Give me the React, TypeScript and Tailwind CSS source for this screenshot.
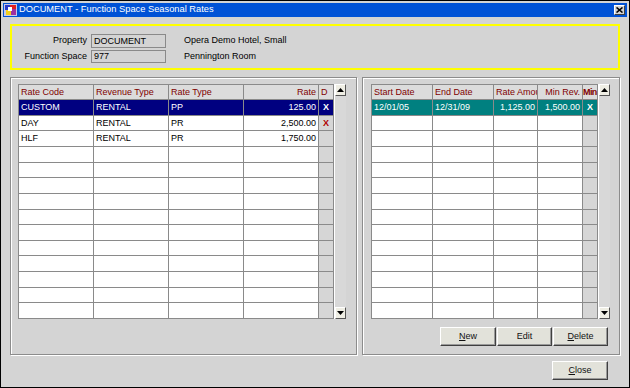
import React from 'react'

type Col = { title: string; w: number; align?: 'left' | 'right' | 'center'; bold?: boolean; gray?: boolean }
type Row = { cells: string[]; sel?: 'navy' | 'teal'; xRed?: boolean }

const LEFT_COLS: Col[] = [
  { title: 'Rate Code', w: 75 },
  { title: 'Revenue Type', w: 75 },
  { title: 'Rate Type', w: 75 },
  { title: 'Rate', w: 75, align: 'right' },
  { title: 'D', w: 15, align: 'center', gray: true },
]

const LEFT_ROWS: Row[] = [
  { cells: ['CUSTOM', 'RENTAL', 'PP', '125.00', 'X'], sel: 'navy' },
  { cells: ['DAY', 'RENTAL', 'PR', '2,500.00', 'X'], xRed: true },
  { cells: ['HLF', 'RENTAL', 'PR', '1,750.00', ''] },
]

const RIGHT_COLS: Col[] = [
  { title: 'Start Date', w: 61 },
  { title: 'End Date', w: 61 },
  { title: 'Rate Amount', w: 44, align: 'right' },
  { title: 'Min Rev.', w: 45, align: 'right' },
  { title: 'Min', w: 15, align: 'center', bold: true, gray: true },
]

const RIGHT_ROWS: Row[] = [{ cells: ['12/01/05', '12/31/09', '1,125.00', '1,500.00', 'X'], sel: 'teal' }]

function Arrow({ up }: { up?: boolean }) {
  return (
    <div className="h-[12px] w-[11px] ml-auto bg-[#efeee4] border border-t-white border-l-white border-r-[#555] border-b-[#555] flex items-center justify-center">
      <svg width="7" height="4" viewBox="0 0 7 4">
        {up ? <polygon points="0,4 7,4 3.5,0" fill="#000" /> : <polygon points="0,0 7,0 3.5,4" fill="#000" />}
      </svg>
    </div>
  )
}

function Grid({ cols, rows }: { cols: Col[]; rows: Row[] }) {
  const empty = 14 - rows.length
  return (
    <div className="flex h-[235px]">
      <div className="flex flex-col border-l border-t border-[#8a8a8a]">
        <div className="flex h-[15px]">
          {cols.map((c, i) => (
            <div
              key={i}
              style={{ width: c.w }}
              className={`h-full border-r border-b border-[#8a8a8a] bg-[#dcdcdc] overflow-hidden whitespace-nowrap leading-[14px] text-[#800000] ${c.bold ? 'font-bold px-0 tracking-[-0.6px]' : 'px-[2px]'} ${c.align === 'right' && c.title !== 'Rate Amount' ? 'text-right' : 'text-left'}`}
            >
              {c.title}
            </div>
          ))}
        </div>
        {rows.map((r, ri) => (
          <div key={ri} className="flex h-[15.7px]">
            {cols.map((c, i) => {
              const bg = r.sel === 'navy' ? 'bg-[#000080] text-white' : r.sel === 'teal' ? 'bg-[#008080] text-white' : c.gray ? 'bg-[#d6d6d6]' : 'bg-white'
              const isX = c.gray
              return (
                <div
                  key={i}
                  style={{ width: c.w }}
                  className={`h-full border-r border-b border-[#8a8a8a] overflow-hidden whitespace-nowrap px-[2px] leading-[15px] ${bg} ${c.align === 'right' ? 'text-right' : c.align === 'center' ? 'text-center' : 'text-left'} ${isX ? 'font-bold' : ''} ${isX && r.xRed ? 'text-[#b00000]' : ''}`}
                >
                  {r.cells[i]}
                </div>
              )
            })}
          </div>
        ))}
        {Array.from({ length: empty }).map((_, ri) => (
          <div key={'e' + ri} className="flex h-[15.7px]">
            {cols.map((c, i) => (
              <div
                key={i}
                style={{ width: c.w }}
                className={`h-full border-r border-b border-[#8a8a8a] ${c.gray ? 'bg-[#d6d6d6]' : 'bg-white'}`}
              />
            ))}
          </div>
        ))}
      </div>
      <div className="w-[12px] flex flex-col bg-[#d8d8d8] border-l border-white">
        <Arrow up />
        <div className="flex-1" />
        <Arrow />
      </div>
    </div>
  )
}

function Btn({ children, w }: { children: React.ReactNode; w: string }) {
  return (
    <div
      className={`${w} h-[19px] bg-[#e2e2da] border border-t-white border-l-white border-r-[#404040] border-b-[#404040] shadow-[inset_-1px_-1px_0_#9a9a9a] flex items-center justify-center text-[#111]`}
    >
      {children}
    </div>
  )
}

export default function App() {
  return (
    <div className="w-[630px] h-[388px] bg-[#d4d4d4] border border-black p-[2px] flex flex-col text-[9px] text-black font-['Liberation_Sans',Arial,sans-serif]">
      <div className="h-[14px] bg-[#0052d6] flex items-center pl-[1px] pr-[2px]">
        <svg width="13" height="12" viewBox="0 0 13 12" className="shrink-0">
          <rect x="0" y="0" width="13" height="12" fill="#c8c8e8" />
          <rect x="1" y="1" width="5" height="5" fill="#2a3ac8" />
          <rect x="6" y="1" width="6" height="4" fill="#e02020" />
          <rect x="2" y="6" width="5" height="5" fill="#f0d020" />
          <rect x="7" y="5" width="5" height="6" fill="#a030a0" />
          <rect x="4" y="3" width="4" height="4" fill="#ffffff" />
        </svg>
        <span className="ml-[2px] text-white text-[9.3px] leading-none">DOCUMENT - Function Space Seasonal Rates</span>
        <div className="ml-auto w-[11px] h-[10px] bg-[#d4d4d4] border border-t-white border-l-white border-r-[#404040] border-b-[#404040] flex items-center justify-center">
          <svg width="7" height="6" viewBox="0 0 7 6">
            <path d="M0.5 0.5 L6.5 5.5 M6.5 0.5 L0.5 5.5" stroke="#000" strokeWidth="1.6" />
          </svg>
        </div>
      </div>

      <div className="flex-1 flex flex-col px-[7px] pt-[7px]">
        <div className="h-[46px] border-2 border-[#ffff00] pt-[8px] flex flex-col gap-[2px]">
          <div className="flex items-center h-[14px]">
            <div className="w-[77px] text-right pr-[2px]">Property</div>
            <div className="ml-[2px] w-[75px] h-[14px] border border-[#8a8a8a] pl-[2px] leading-[12px]">DOCUMENT</div>
            <div className="ml-[18px]">Opera Demo Hotel, Small</div>
          </div>
          <div className="flex items-center h-[13px]">
            <div className="w-[77px] text-right pr-[2px]">Function Space</div>
            <div className="ml-[2px] w-[75px] h-[13px] border border-[#8a8a8a] pl-[2px] leading-[11px]">977</div>
            <div className="ml-[18px]">Pennington Room</div>
          </div>
        </div>

        <div className="mt-[7px] flex gap-[5px]">
          <div className="w-[347px] h-[278px] border border-[#8c8c8c] shadow-[inset_1px_1px_0_#ffffff,1px_1px_0_#ffffff] pl-[7px] pt-[6px]">
            <Grid cols={LEFT_COLS} rows={LEFT_ROWS} />
          </div>
          <div className="w-[258px] h-[278px] border border-[#8c8c8c] shadow-[inset_1px_1px_0_#ffffff,1px_1px_0_#ffffff] pl-[8px] pt-[6px] flex flex-col">
            <Grid cols={RIGHT_COLS} rows={RIGHT_ROWS} />
            <div className="mt-[8px] flex gap-[1px] pl-[69px]">
              <Btn w="w-[56px]">
                <span><span className="underline">N</span>ew</span>
              </Btn>
              <Btn w="w-[55px]">Edit</Btn>
              <Btn w="w-[55px]">
                <span><span className="underline">D</span>elete</span>
              </Btn>
            </div>
          </div>
        </div>

        <div className="mt-[6px] flex justify-end pr-[12px]">
          <Btn w="w-[56px]">
            <span><span className="underline">C</span>lose</span>
          </Btn>
        </div>
      </div>
    </div>
  )
}
